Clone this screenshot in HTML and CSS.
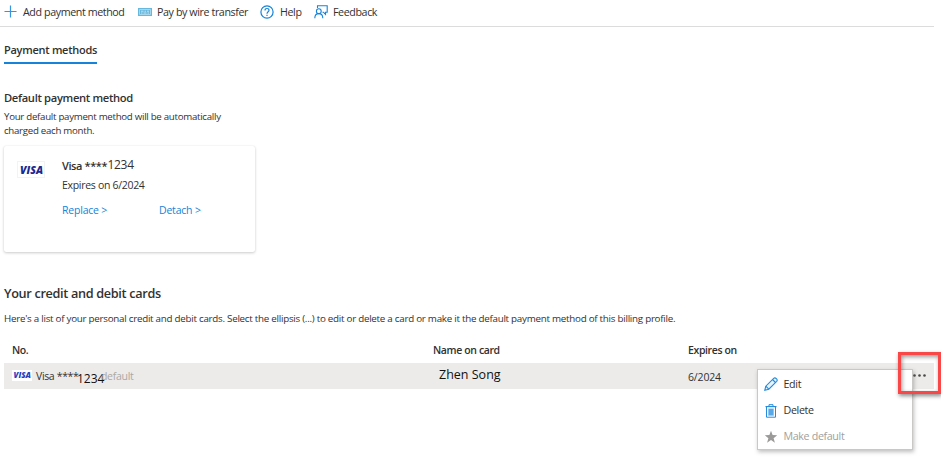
FILE: index.html
```html
<!DOCTYPE html>
<html lang="en">
<head>
<meta charset="utf-8">
<title>Payment methods</title>
<link rel="stylesheet" href="styles.css">
</head>
<body>
<header class="toolbar">
  <span class="command command-add">
    <svg class="icon" width="13" height="13" viewBox="0 0 13 13"><path d="M6.5 .5v12M.5 6.5h12" stroke="#3794e0" stroke-width="1.2"/></svg>
    <span class="add-label">Add payment method</span>
  </span>
  <span class="command command-wire">
    <svg class="icon" width="14" height="8" viewBox="0 0 14 8"><rect width="14" height="8" fill="#68b7dc"/><path d="M1.5 1.5h11v5h-11z" fill="none" stroke="#a5d8ee"/><path d="M3 3.2h2.5M6.5 3.2H8M9 3.2h2M3 5h1.5M5.5 5h3M9.5 5H11" stroke="#d9f0fa" stroke-width=".8"/></svg>
    <span class="wire-label">Pay by wire transfer</span>
  </span>
  <span class="command command-help">
    <svg class="icon" width="14" height="14" viewBox="0 0 14 14" fill="none" stroke="#1683d9" stroke-width="1.2"><circle cx="7" cy="7" r="6.1"/><path d="M5 5.5C5 4.2 5.8 3.5 7 3.5s2 .8 2 1.8C9 6.7 7 6.8 7 8.7"/><path d="M7 9.8v1.3"/></svg>
    <span class="help-label">Help</span>
  </span>
  <span class="command command-feedback">
    <svg class="icon" width="14" height="14" viewBox="0 0 14 14" fill="none" stroke="#1683d9" stroke-width="1.1"><path d="M3.5 3V.8h9.7v6.4h-1.7v2.1L9.4 7.2H8.5"/><circle cx="4.8" cy="6.2" r="2.4"/><path d="M.8 13.3c0-2.8 1.7-4.7 4-4.7s4 1.9 4 4.7"/></svg>
    <span class="feedback-label">Feedback</span>
  </span>
</header>
<main>
  <nav class="tabs"><span class="tab">Payment methods</span></nav>
  <section class="default-method">
    <h2>Default payment method</h2>
    <p class="summary"><span>Your default payment method will be automatically</span><br>charged each month.</p>
    <article class="card">
      <span class="brand">
        <svg width="28" height="17" viewBox="0 0 28 17"><rect x=".5" y=".5" width="27" height="16" fill="#fff" stroke="#f3f3f3"/><text x="3" y="12.5" class="visa" textLength="23" lengthAdjust="spacingAndGlyphs">VISA</text></svg>
      </span>
      <div class="card-info">
        <div class="card-name"><span class="masked">Visa ****</span><span class="digits">1234</span></div>
        <div class="expires">Expires on 6/2024</div>
        <div class="links"><a class="replace">Replace &gt;</a><a class="detach">Detach &gt;</a></div>
      </div>
    </article>
  </section>
  <section class="cards">
    <h3>Your credit and debit cards</h3>
    <p class="description">Here's a list of your personal credit and debit cards. Select the ellipsis (...) to edit or delete a card or make it the default payment method of this billing profile.</p>
    <div class="row row-head"><span class="head-no">No.</span><span class="head-name">Name on card</span><span class="head-expiry">Expires on</span></div>
    <div class="row row-data">
      <span class="number">
        <svg class="mini-brand" width="20" height="11" viewBox="0 0 20 11"><rect width="20" height="11" fill="#fff"/><text x="1.5" y="8" class="visa visa-mini" textLength="17.5" lengthAdjust="spacingAndGlyphs">VISA</text></svg>
        <span class="row-visa">Visa ****</span><span class="row-digits">1234</span><span class="row-default">default</span>
      </span>
      <span class="holder">Zhen Song</span>
      <span class="row-expiry">6/2024</span>
    </div>
  </section>
</main>
<div class="menu">
  <div class="menu-item">
    <svg width="14" height="14" viewBox="0 0 14 14" fill="#e8f4fc" stroke="#258bdb" stroke-width="1.1"><path d="M.8 13.2l1-4L9.7 1.3c1.6-1.5 4.5 1.4 3 3L4.8 12.2z"/><path d="M8.5 2.5l3 3M1.8 9.2l3 3"/></svg>
    <span class="edit-label">Edit</span>
  </div>
  <div class="menu-item">
    <svg width="14" height="14" viewBox="0 0 14 14" fill="none" stroke="#258bdb"><path d="M2.5 3v10.2h9V3" fill="#fff"/><path d="M1.5 2.6h11" stroke-width="1.2"/><path d="M5 2.2V.7h4v1.5"/><path d="M4.2 4.5h5.6v7.2H4.2z" fill="#73b8ee" stroke="none"/><path d="M6 5v6M8 5v6" stroke-width=".7"/></svg>
    <span class="delete-label">Delete</span>
  </div>
  <div class="menu-item disabled">
    <svg width="14" height="14" viewBox="0 0 14 14"><path d="M7 .8l1.6 4.3 4.6.2-3.6 2.9 1.3 4.5L7 10.1l-3.9 2.6 1.3-4.5L.8 5.3l4.6-.2z" fill="#9b9a99"/></svg>
    <span class="make-label">Make default</span>
  </div>
</div>
<div class="highlight"><svg width="15" height="3" viewBox="0 0 15 3" fill="#4a4949"><circle cx="1.5" cy="1.5" r="1.3"/><circle cx="6.5" cy="1.5" r="1.3"/><circle cx="11.5" cy="1.5" r="1.3"/></svg></div>
</body>
</html>
```
FILE: styles.css
```css
* { box-sizing: border-box; }
body {
  position: relative;
  width: 941px;
  height: 461px;
  margin: 0;
  overflow: hidden;
  background: #fff;
  color: #323130;
  font: 10.5px/15px "Open Sans", "Noto Sans", sans-serif;
  letter-spacing: -.3px;
  white-space: nowrap;
}
h2, h3, p { margin: 0; }
svg { display: block; flex: none; }
.toolbar {
  display: flex;
  align-items: center;
  width: 934px;
  height: 27px;
  padding: 0 0 3px 4px;
  border-bottom: 1px solid #dcdcdc;
}
.command { display: flex; align-items: center; font-size: 10.7px; letter-spacing: -.4px; }
.command > span { padding-top: 1px; }
.command-add { width: 134px; gap: 6px; }
.command-wire { width: 122px; gap: 5px; }
.command-help { width: 54px; gap: 6px; }
.command-feedback { gap: 5px; }
.tabs { height: 64px; padding: 15px 0 0 4px; }
.tab {
  display: inline-block;
  width: 93px;
  height: 22px;
  border-bottom: 2px solid #1683d9;
  font-size: 11px;
  font-weight: 600;
  letter-spacing: -.27px;
  line-height: 16px;
}
.default-method { height: 193px; padding-left: 4px; }
.default-method h2 { font-size: 11.2px; font-weight: 600; line-height: 14px; letter-spacing: -.33px; }
.summary { margin-top: 5px; font-size: 9.7px; line-height: 14px; letter-spacing: -.28px; }
.card {
  display: flex;
  width: 251px;
  height: 106px;
  margin-top: 8px;
  border-radius: 2px;
  box-shadow: 0 1px 3px rgba(0, 0, 0, .2), 0 0 1px rgba(0, 0, 0, .1);
}
.brand { width: 58px; padding: 15px 0 0 13px; }
.visa { fill: #172a91; font: italic 800 10.5px "Open Sans", sans-serif; letter-spacing: 0; }
.visa-mini { fill: #293fbe; font-size: 7.8px; }
.card-name { display: flex; height: 27px; padding-top: 12px; font-size: 11px; }
.masked { width: 45.5px; font-weight: 600; letter-spacing: -.4px; }
.digits { margin-top: -1px; font-size: 12px; letter-spacing: -.3px; }
.expires { margin-top: 5px; }
.links { display: flex; margin-top: 10px; color: #1683d9; letter-spacing: -.2px; }
.replace { width: 97px; }
.cards { padding-left: 4px; }
.cards h3 { font-size: 12.7px; font-weight: 600; line-height: 18px; letter-spacing: -.33px; }
.description { margin-top: 10px; font-size: 9.8px; line-height: 14px; letter-spacing: -.262px; }
.row { display: grid; grid-template-columns: 429px 255px 1fr; align-items: center; }
.row-head { height: 26px; margin-top: 11px; font-weight: 600; letter-spacing: -.38px; }
.head-no { padding-left: 8px; }
.row-data { width: 930px; height: 26px; background: #edebe9; letter-spacing: -.15px; }
.number { display: flex; align-items: center; padding-left: 8px; }
.mini-brand { margin-top: -1px; }
.row-visa { width: 41px; margin: 1px 0 0 4px; letter-spacing: -.35px; }
.row-digits { width: 28px; margin-top: 4px; font-size: 12px; color: #111; letter-spacing: 0; }
.row-default { margin: 1px 0 0 -4px; color: #aaa8a6; letter-spacing: -.3px; }
.holder { padding: 0 0 4px 6px; font-size: 12.5px; color: #111; letter-spacing: 0; }
.row-expiry { padding-top: 2px; }
.menu {
  position: absolute;
  top: 369px;
  left: 757px;
  width: 156px;
  height: 81px;
  padding-top: 1px;
  border: 1px solid #c9c8c7;
  background: #fff;
  box-shadow: 1px 2px 4px rgba(0, 0, 0, .25);
}
.menu-item { display: flex; gap: 6px; align-items: center; height: 26.4px; padding-left: 5.5px; font-size: 10.7px; letter-spacing: -.35px; }
.disabled { color: #a19f9d; }
.highlight {
  position: absolute;
  top: 352px;
  left: 898px;
  width: 43px;
  height: 42px;
  padding: 19px 0 0 12px;
  border: 3px solid #f94747;
  box-shadow: 1px 2px 4px rgba(0, 0, 0, .45), inset 1px 2px 4px rgba(0, 0, 0, .4);
}
```
